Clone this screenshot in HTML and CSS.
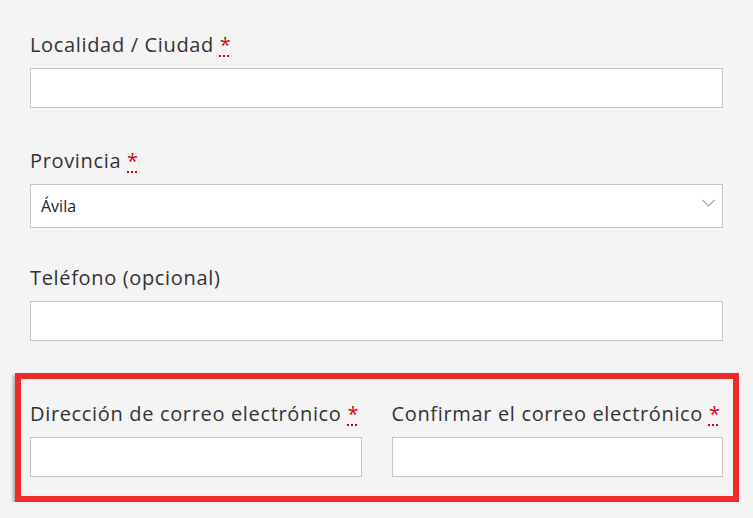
FILE: index.html
```html
<!DOCTYPE html>
<html lang="es">
<head>
<meta charset="utf-8">
<link rel="stylesheet" href="styles.css">
</head>
<body>
<form class="form">
  <div class="field field--first">
    <label class="label">Localidad / Ciudad <abbr class="req" title="obligatorio">*</abbr></label>
    <input class="input" type="text">
  </div>
  <div class="field field--select">
    <label class="label">Provincia <abbr class="req" title="obligatorio">*</abbr></label>
    <div class="select">
      <span class="select-value">Ávila</span>
      <svg class="chevron" width="13" height="8" viewBox="0 0 13 8"><path d="M0.5 0.8 L6.5 6.8 L12.5 0.8" fill="none" stroke="#9a9a9a" stroke-width="1.1"/></svg>
    </div>
  </div>
  <div class="field field--last">
    <label class="label">Teléfono (opcional)</label>
    <input class="input" type="text">
  </div>
  <div class="highlight">
    <div class="field">
      <label class="label">Dirección de correo electrónico <abbr class="req" title="obligatorio">*</abbr></label>
      <input class="input" type="text">
    </div>
    <div class="field">
      <label class="label">Confirmar el correo electrónico <abbr class="req" title="obligatorio">*</abbr></label>
      <input class="input" type="text">
    </div>
  </div>
</form>
</body>
</html>
```

FILE: styles.css
```css
html, body {
  margin: 0;
  padding: 0;
  background: #f4f4f4;
}
body {
  font-family: "Open Sans", "Liberation Sans", sans-serif;
  color: #333;
}
.form {
  display: flex;
  flex-direction: column;
  padding: 32px 30px 0 30px;
}
.field {
  display: flex;
  flex-direction: column;
}
.field--first {
  margin-bottom: 40px;
}
.field--select {
  margin-bottom: 37px;
}
.field--last {
  margin-bottom: 32px;
}
.label {
  font-size: 20px;
  line-height: 26px;
  letter-spacing: 0.66px;
  margin-bottom: 10px;
  color: #333;
}
.req {
  color: #d0021b;
  text-decoration: underline dotted #d0021b;
  text-underline-offset: 3px;
  border: none;
  cursor: help;
}
.input {
  box-sizing: border-box;
  height: 40px;
  width: 100%;
  margin: 0;
  border: 1px solid #c6c6c6;
  background: #fff;
  font: inherit;
}
.select {
  box-sizing: border-box;
  height: 44px;
  display: flex;
  align-items: center;
  justify-content: space-between;
  padding: 0 7px 0 10px;
  border: 1px solid #c6c6c6;
  background: #fff;
  font-size: 16px;
  color: #222;
}
.chevron {
  margin-top: -7px;
}
.highlight {
  display: grid;
  grid-template-columns: 1fr 1fr;
  column-gap: 30px;
  margin: 0 -16px 0 -15px;
  padding: 22px 10px 19px 9px;
  border: 6px solid #f12a2a;
  box-shadow: -2px 2px 3px rgba(0, 0, 0, 0.3);
}
```
